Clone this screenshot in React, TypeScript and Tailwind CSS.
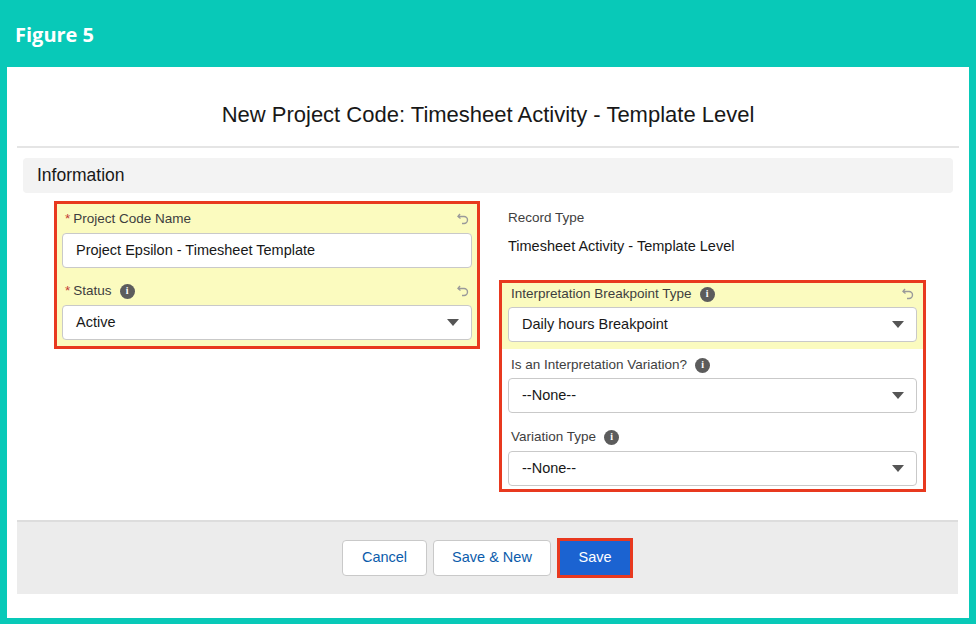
import React from "react";

const Info = () => (
  <span className="inline-flex items-center justify-center w-[15px] h-[15px] rounded-full bg-[#5c5c5c] text-white text-[10px] font-bold ml-2 leading-none" style={{fontFamily:"Georgia, serif"}}>i</span>
);
const Undo = () => (
  <svg width="14" height="14" viewBox="0 0 14 14" fill="none" stroke="#9a9a9a" strokeWidth="1.4"><path d="M4 2 L2 4.5 L4.5 6.5" /><path d="M2.3 4.5 H8 a3.5 3.5 0 0 1 0 7 H6" /></svg>
);
const Caret = () => (
  <svg width="12" height="8" viewBox="0 0 12 8"><path d="M0 0 H12 L6 7 Z" fill="#555" /></svg>
);
const Select = ({ v }: { v: string }) => (
  <div className="h-[35px] bg-white border border-[#c9c9c9] rounded-[4px] flex items-center justify-between pl-[13px] pr-[12px] text-[14.5px] text-[#181818]">
    <span>{v}</span><Caret />
  </div>
);

export default function App() {
  return (
    <div className="w-[976px] h-[624px] bg-[#08c9b8] pl-[7px] pr-[7px] pb-[6px] pt-[2px] flex flex-col" style={{ fontFamily: "'Liberation Sans', Arial, sans-serif" }}>
      <div className="h-[65px] flex items-center pl-[8px] text-white text-[20px] font-bold" style={{fontFamily:"'Open Sans', sans-serif"}}>Figure 5</div>
      <div className="flex-1 bg-white flex flex-col px-[10px]">
        <div className="h-[81px] flex items-center justify-center text-[22px] text-[#181818] border-b-2 border-[#e5e5e5] pt-[16px]">New Project Code: Timesheet Activity - Template Level</div>
        <div className="mx-[6px] mt-[10px] h-[35px] bg-[#f3f3f3] rounded-[4px] flex items-center pl-[14px] text-[17.5px] text-[#181818]">Information</div>
        <div className="flex mt-[8px] pl-[37px] h-[319px]">
          <div className="w-[426px] h-[148px] border-[3px] border-[#e8391f] bg-[#fbfbbf] px-[5px] pt-[4px]">
            <div className="flex justify-between items-center h-[22px] text-[13.5px] text-[#3e3e3e] pl-[3px] pr-[2px]"><span><span className="text-[#c23934] mr-[3px]">*</span>Project Code Name</span><Undo /></div>
            <div className="mt-[3px] h-[35px] bg-white border border-[#c9c9c9] rounded-[4px] flex items-center pl-[13px] text-[14.5px] text-[#181818]">Project Epsilon - Timesheet Template</div>
            <div className="flex justify-between items-center h-[22px] mt-[12px] text-[13.5px] text-[#3e3e3e] pl-[3px] pr-[2px]"><span className="flex items-center"><span className="text-[#c23934] mr-[3px]">*</span>Status<Info /></span><Undo /></div>
            <div className="mt-[3px]"><Select v="Active" /></div>
          </div>
          <div className="ml-[19px] w-[427px] flex flex-col">
            <div className="pl-[9px] text-[13.5px] text-[#3e3e3e] mt-[7px]">Record Type</div>
            <div className="pl-[9px] text-[14.5px] text-[#181818] mt-[8px]">Timesheet Activity - Template Level</div>
            <div className="mt-[22px] h-[212px] border-[3px] border-[#e8391f] overflow-hidden">
              <div className="bg-[#fbfbbf] px-[6px] pt-[0px] pb-[7px]">
                <div className="flex justify-between items-center h-[22px] text-[13.5px] text-[#3e3e3e] pl-[3px] pr-[2px]"><span className="flex items-center">Interpretation Breakpoint Type<Info /></span><Undo /></div>
                <div className="mt-[2px]"><Select v="Daily hours Breakpoint" /></div>
              </div>
              <div className="px-[6px]">
                <div className="flex items-center h-[22px] text-[13.5px] text-[#3e3e3e] pl-[3px] mt-[5px]">Is an Interpretation Variation?<Info /></div>
                <div className="mt-[2px]"><Select v="--None--" /></div>
                <div className="flex items-center h-[22px] text-[13.5px] text-[#3e3e3e] pl-[3px] mt-[13px]">Variation Type<Info /></div>
                <div className="mt-[3px]"><Select v="--None--" /></div>
              </div>
            </div>
          </div>
        </div>
        <div className="h-[74px] bg-[#ececec] border-t-2 border-[#dddddd] flex items-center justify-center gap-[6px] mr-[1px]">
          <div className="w-[85px] h-[36px] bg-white border border-[#c9c9c9] rounded-[4px] flex items-center justify-center text-[14.5px] text-[#0b5cab]">Cancel</div>
          <div className="w-[118px] h-[36px] bg-white border border-[#c9c9c9] rounded-[4px] flex items-center justify-center text-[14.5px] text-[#0b5cab]">Save &amp; New</div>
          <div className="w-[76px] h-[40px] border-[3px] border-[#e8391f] bg-[#1b63d1] flex items-center justify-center text-[14.5px] text-white">Save</div>
        </div>
        <div className="flex-1" />
      </div>
    </div>
  );
}
